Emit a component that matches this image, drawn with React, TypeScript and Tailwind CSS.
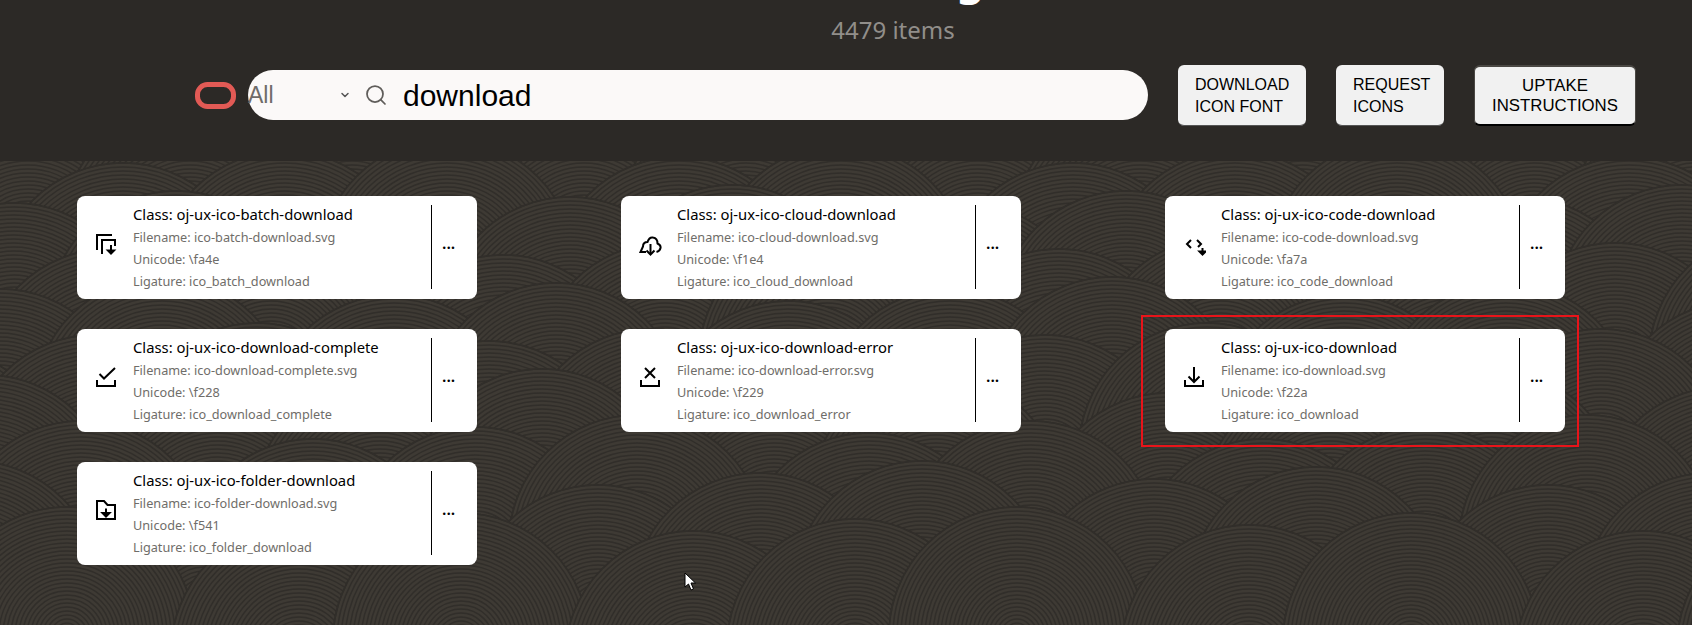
import { ChevronDown, Search } from "lucide-react";
import type { ReactNode } from "react";

type IconCard = {
  name: string;
  unicode: string;
  icon: ReactNode;
  marked?: boolean;
};

const tray = <path d="M3 15v6h18v-6" />;

const cards: IconCard[] = [
  {
    name: "batch-download",
    unicode: "fa4e",
    icon: (
      <>
        <path d="M3 18V3h15" />
        <path d="M8 22V8h13v6" />
        <path d="M17 13v7" />
        <path d="M14 18.5l3 3 3-3z" fill="currentColor" />
      </>
    ),
  },
  {
    name: "cloud-download",
    unicode: "f1e4",
    icon: (
      <>
        <path d="M8 20H2.5L5 14.5c0-3 2-4.5 4.5-4.5C10.5 7 12.5 5 15 5.5c3 .5 4.5 3 4.5 6 2 1 3.5 2.5 3 4.5-.4 2-2 3.5-4 4" />
        <path d="M12.5 12v10" />
        <path d="M8.5 18.5l4 4 4-4" />
      </>
    ),
  },
  {
    name: "code-download",
    unicode: "fa7a",
    icon: (
      <>
        <path d="M9 8l-4 4 4 4" />
        <path d="M15 8l4 4-3 3" />
        <path d="M20.5 16v5" />
        <path d="M17.5 19.5l3 3 3-3z" fill="currentColor" />
      </>
    ),
  },
  {
    name: "download-complete",
    unicode: "f228",
    icon: (
      <>
        <path d="M5.5 9l4.5 4.5L21 3" />
        {tray}
      </>
    ),
  },
  {
    name: "download-error",
    unicode: "f229",
    icon: (
      <>
        <path d="M7 3l10 10M17 3L7 13" />
        {tray}
      </>
    ),
  },
  {
    name: "download",
    unicode: "f22a",
    marked: true,
    icon: (
      <>
        <path d="M12 2v15" />
        <path d="M6.5 11.5L12 17l5.5-5.5" />
        {tray}
      </>
    ),
  },
  {
    name: "folder-download",
    unicode: "f541",
    icon: (
      <>
        <path d="M3 3h7l3.5 4H21v14H3z" />
        <path d="M12 10.5V16" />
        <path d="M8.5 15l3.5 3.5 3.5-3.5z" fill="currentColor" />
      </>
    ),
  },
];

const ringGap = 4;
const scaleRadius = 128;
const scaleRows = Array.from({ length: 12 }, (_, row) => row);
const scaleCols = Array.from({ length: 11 }, (_, col) => col);
const rings = Array.from({ length: 31 }, (_, i) => scaleRadius - i * ringGap);

function Texture() {
  return (
    <svg className="absolute inset-0 h-full w-full" aria-hidden="true">
      {scaleRows.map((row) =>
        scaleCols.map((col) => {
          // little offsets so the scales don't read as a perfect grid
          const jitter = ((row * 7 + col * 13) % 5) - 2;
          const cx = col * 190 - (row % 2 ? 95 : 0) + jitter * 14;
          const cy = row * 46 - 20 + jitter * 6;
          return (
            <g key={`${row}-${col}`} fill="none" stroke="#312e2a" strokeWidth="1.5">
              <circle cx={cx} cy={cy} r={scaleRadius} fill="#3e3a34" />
              {rings.map((r) => (
                <circle key={r} cx={cx} cy={cy} r={r} />
              ))}
            </g>
          );
        }),
      )}
    </svg>
  );
}

function Card({ card }: { card: IconCard }) {
  const underscored = card.name.replace(/-/g, "_");
  return (
    <div className="relative flex h-[103px] items-center rounded-lg bg-white pl-[17px]">
      <svg
        viewBox="0 0 24 24"
        className="mb-2 h-6 w-6 shrink-0 text-black"
        fill="none"
        stroke="currentColor"
        strokeWidth="2"
      >
        {card.icon}
      </svg>
      <div className="ml-[15px] mt-[8px] w-[298px] shrink-0 self-start text-[12.7px] leading-[22px] text-[#6f6d69]">
        <div className="mb-[2px] text-[14.8px] leading-[20px] text-black">Class: oj-ux-ico-{card.name}</div>
        <div>Filename: ico-{card.name}.svg</div>
        <div>Unicode: \{card.unicode}</div>
        <div>Ligature: ico_{underscored}</div>
      </div>
      <div className="mb-px h-[84px] w-px shrink-0 bg-black" />
      <button className="ml-[10px] mb-[10px] text-[16px] font-semibold leading-none text-black">...</button>
      {card.marked && (
        <div className="absolute -top-[14px] -right-[14px] -bottom-[15px] -left-[24px] border-2 border-[#e8141a]" />
      )}
    </div>
  );
}

export default function App() {
  return (
    <div className="relative flex h-[625px] flex-col overflow-hidden bg-[#3a3631] font-['Noto_Sans',sans-serif]">
      <header className="h-[161px] shrink-0 bg-[#2c2926]">
        <h1 className="-mt-[51px] pl-[108px] text-center text-[44px] font-bold leading-[56px] text-white">Catalog</h1>
        <p className="mt-[9px] pl-[94px] text-center text-[24px] leading-[32px] text-[#918e8a]">4479 items</p>
        <div className="mt-[19px] flex items-center pl-[195px] font-['Liberation_Sans',sans-serif]">
          <svg viewBox="0 0 41 27" className="h-[27px] w-[41px] shrink-0" fill="none">
            <rect x="2.5" y="2.5" width="36" height="22" rx="10" stroke="#e25a55" strokeWidth="5" />
          </svg>
          <div className="ml-3 mb-[1px] flex h-[50px] w-[900px] items-center rounded-[25px] bg-[#fbf9f8]">
            <span className="w-[91px] text-[23px] text-[#6e6c69]">All</span>
            <ChevronDown size={12} strokeWidth={3} className="text-[#555]" />
            <Search size={24} strokeWidth={1.75} className="ml-[13px] text-[#5f5d5a]" />
            <input
              readOnly
              value="download"
              className="ml-[15px] w-[400px] bg-transparent text-[30px] text-black outline-none"
            />
          </div>
          <button className="ml-[30px] h-[61px] w-[128px] rounded-md border-b border-[#555] bg-[#f1f1f1] pl-[17px] pt-[2px] text-left text-[16px] leading-[22px] text-black">
            DOWNLOAD
            <br />
            ICON FONT
          </button>
          <button className="ml-[30px] h-[61px] w-[108px] rounded-md border-b border-[#555] bg-[#f1f1f1] pl-[17px] pt-[2px] text-left text-[16px] leading-[22px] text-black">
            REQUEST
            <br />
            ICONS
          </button>
          <button className="ml-[30px] h-[61px] w-[162px] rounded-md border-x border-t-2 border-b-2 border-x-[#4a4743] border-t-[#4a4743] border-b-black bg-[#f1f1f1] text-center text-[16.8px] leading-[20px] text-black">
            UPTAKE
            <br />
            INSTRUCTIONS
          </button>
        </div>
      </header>
      <main className="relative flex-1">
        <Texture />
        <div className="relative grid grid-cols-[400px_400px_400px] gap-x-[144px] gap-y-[30px] pl-[77px] pt-[35px]">
          {cards.map((card) => (
            <Card key={card.name} card={card} />
          ))}
        </div>
        <svg viewBox="0 0 12 19" className="absolute left-[684px] top-[411px] h-[19px] w-3">
          <path d="M1 1v14l3.5-3 2.5 6 2.5-1-2.5-6h4.5z" fill="#fff" stroke="#000" />
        </svg>
      </main>
    </div>
  );
}
